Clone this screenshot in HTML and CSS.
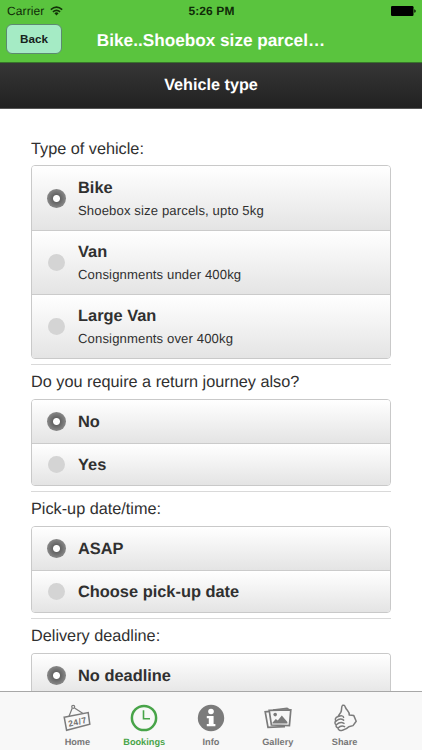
FILE: index.html
```html
<!DOCTYPE html>
<html lang="en">
<head>
<meta charset="utf-8">
<title>Vehicle type</title>
<link rel="stylesheet" href="styles.css">
</head>
<body>
<div class="app">
  <header class="top">
    <div class="status">
      <div class="carrier"><span>Carrier</span>
        <svg class="wifi" width="13" height="10" viewBox="0 0 13 10"><path d="M.8 3.6Q6.5-1.4 12.2 3.6M2.9 5.9Q6.5 2.9 10.1 5.9" fill="none" stroke="#123208" stroke-width="1.5"/><path d="M4.4 7.2Q6.5 5.5 8.6 7.2L6.5 9.5Z" fill="#123208"/></svg>
      </div>
      <div class="time">5:26 PM</div>
      <svg class="battery" width="25" height="10" viewBox="0 0 25 10"><rect width="22.5" height="10" rx="1.2"/><path d="M23.3 3.2q1.4.4 1.4 1.8t-1.4 1.8z"/></svg>
    </div>
    <div class="nav">
      <button class="back">Back</button>
      <h1 class="title">Bike..Shoebox size parcel…</h1>
    </div>
  </header>
  <h2 class="bar">Vehicle type</h2>
  <main class="form">
    <section class="group">
      <p class="label">Type of vehicle:</p>
      <div class="options tall">
        <div class="option"><i class="radio on"></i><div><b class="name">Bike</b><span class="desc">Shoebox size parcels, upto 5kg</span></div></div>
        <div class="option"><i class="radio"></i><div><b class="name">Van</b><span class="desc">Consignments under 400kg</span></div></div>
        <div class="option"><i class="radio"></i><div><b class="name">Large Van</b><span class="desc">Consignments over 400kg</span></div></div>
      </div>
    </section>
    <section class="group">
      <p class="label">Do you require a return journey also?</p>
      <div class="options">
        <div class="option"><i class="radio on"></i><b class="name">No</b></div>
        <div class="option"><i class="radio"></i><b class="name">Yes</b></div>
      </div>
    </section>
    <section class="group">
      <p class="label">Pick-up date/time:</p>
      <div class="options">
        <div class="option"><i class="radio on"></i><b class="name">ASAP</b></div>
        <div class="option"><i class="radio"></i><b class="name">Choose pick-up date</b></div>
      </div>
    </section>
    <section class="group">
      <p class="label">Delivery deadline:</p>
      <div class="options open">
        <div class="option"><i class="radio on"></i><b class="name">No deadline</b></div>
      </div>
    </section>
  </main>
  <nav class="tabs">
    <div class="tab">
      <svg width="28" height="28" viewBox="0 0 28 28" fill="none" stroke="#7b7b7b" stroke-width="1.2"><circle cx="10.2" cy="2.8" r="1.5"/><path d="M9.2 4.2L6 12.2M11.5 4L20 9.5"/><path d="M1.2 13.2L25.2 8.6L26.8 20.2L3.6 26.2Z" stroke-width="1.5"/><text x="5" y="20.9" transform="rotate(-13 14 18)" font-family="Liberation Sans" font-weight="bold" font-size="8.5" fill="#707070" stroke="none" textLength="18.5">24/7</text></svg>
      <span>Home</span>
    </div>
    <div class="tab active">
      <svg width="28" height="28" viewBox="0 0 28 28" fill="none" stroke="#48a449"><circle cx="14" cy="14" r="12.1" stroke-width="2.5"/><path d="M13.5 6.3V14.8H20" stroke-width="1.6"/></svg>
      <span>Bookings</span>
    </div>
    <div class="tab">
      <svg width="28" height="28" viewBox="0 0 28 28"><circle cx="14" cy="14" r="13.2" fill="#7b7b7b"/><circle cx="14" cy="7.5" r="2.8" fill="#fff"/><path d="M9.8 12H16.6V20H18.4V22.2H9.8V20H11.8V14.2H9.8Z" fill="#fff"/></svg>
      <span>Info</span>
    </div>
    <div class="tab">
      <svg width="28" height="28" viewBox="0 0 28 28" fill="none" stroke="#7b7b7b" stroke-width="1.7"><path d="M5.6 7.4L1.2 7.8L4 23.4L21 22.6M9 6L23 4.4L26 6.2"/><path d="M5.2 6.4L26.8 5.8L25.4 21.6L7.4 21Z" fill="#f7f7f7"/><circle cx="11.2" cy="10.6" r="1.8" fill="#7b7b7b" stroke="none"/><path d="M8.4 18.7L11.8 15L13.8 16.4L17.8 11.6L23.4 18V19.6H8.4Z" fill="#7b7b7b" stroke="none"/></svg>
      <span>Gallery</span>
    </div>
    <div class="tab">
      <svg width="28" height="28" viewBox="0 0 28 28" fill="none" stroke="#7b7b7b" stroke-width="1.5" stroke-linejoin="round" stroke-linecap="round"><path d="M12.6 13.4C12.4 11.6 10 11.4 7.2 12.6C4 13.4 3.6 15.8 5.2 17C3.4 17.8 3.6 20.2 5.4 20.8C4.4 22 5.4 23.6 7 24C7 25.8 9 27 11.2 26.4C13.8 25.6 16 25 17.8 22.8L22 21.6L25.2 17.2L22.8 11.6L18.2 11C18.8 7.6 15.6 6.4 14.4 3.4C13.8 1.4 12.8 .8 11.6 1.3C9.8 2.2 11.4 5.6 9.8 8.4C8.8 10 7.2 11 7.2 12.6M5.2 17C7.6 14.8 10.6 14.6 12.6 16.2M5.4 20.8C8 18.4 11 18.2 13 19.4M7 24C9.2 21.8 11.6 21.6 13.6 22.6"/></svg>
      <span>Share</span>
    </div>
  </nav>
</div>
</body>
</html>
```
FILE: styles.css
```css
* { box-sizing: border-box; }
body { margin: 0; background: #fff; font-family: "Liberation Sans", Arial, sans-serif; color: #303030; text-rendering: geometricPrecision; }
.app { width: 422px; height: 750px; display: flex; flex-direction: column; overflow: hidden; }
.top { height: 63px; flex: none; background: #5ac43e; border-bottom: 1px solid #38752b; }
.status { height: 22px; padding: 0 6px 0 7px; display: grid; grid-template-columns: 1fr auto 1fr; align-items: center; color: #102b08; font-size: 12px; }
.carrier { display: flex; align-items: center; gap: 6px; letter-spacing: .1px; }
.time { font-weight: bold; color: #102b08; letter-spacing: .1px; }
.battery { justify-self: end; fill: #000; }
.nav { height: 33px; display: grid; grid-template-columns: 62px 1fr 62px; align-items: center; }
.back { width: 56px; height: 30px; margin: 1px 0 0 6px; padding: 0 0 2px; border: 1px solid #5c8a70; border-radius: 6px; background: #a5ebc5; color: #17231d; font: bold 11.7px "Liberation Sans", Arial, sans-serif; }
.title { margin: 2px 0 0; text-align: center; font-size: 17.2px; line-height: 24px; color: #fff; white-space: nowrap; }
.bar { height: 46px; flex: none; margin: 0; background: linear-gradient(#363636, #212121); border-bottom: 1px solid #555; color: #fff; text-align: center; font-size: 16.2px; line-height: 44px; }
.form { flex: 1; min-height: 0; overflow: hidden; padding: 26px 31px 0; }
.group { border-bottom: 1px solid #d9d9d9; padding-bottom: 5px; }
.label { margin: 0; height: 34px; padding-top: 6px; font-size: 16.25px; line-height: 22px; white-space: nowrap; }
.group:first-child .label { height: 30px; padding-top: 3px; }
.options { height: 87px; border: 1px solid #c9c9c9; border-radius: 4px; overflow: hidden; display: grid; grid-auto-rows: 1fr; }
.options.tall { height: 194px; }
.options.open { height: 43px; border-bottom: 0; border-radius: 4px 4px 0 0; }
.option { display: flex; align-items: center; gap: 12px; padding: 0 0 0 15px; background: linear-gradient(#fff, #e4e4e4); }
.option + .option { border-top: 1px solid #cbcbcb; }
.radio { flex: none; width: 19px; height: 19px; border-radius: 50%; border: 1px solid #fff0; background: #d4d4d4; background-clip: padding-box; }
.radio.on { border: 0; background: radial-gradient(circle, #fff 3px, #656565 4px, #858585 9px); }
.name { display: block; font-size: 16.4px; line-height: 22px; white-space: nowrap; }
.option > .name { margin-top: 2px; }
.desc { display: block; font-size: 13.1px; line-height: 18px; margin-top: 3px; white-space: nowrap; letter-spacing: .13px; }
.tabs { height: 59px; flex: none; border-top: 1px solid #a8a8a8; background: #f8f8f8; padding: 12px 44px 0; display: grid; grid-template-columns: repeat(5, 1fr); }
.tab { display: flex; flex-direction: column; align-items: center; gap: 4px; color: #777; font-size: 9.2px; font-weight: bold; line-height: 12px; }
.tab.active { color: #48a449; }
```
